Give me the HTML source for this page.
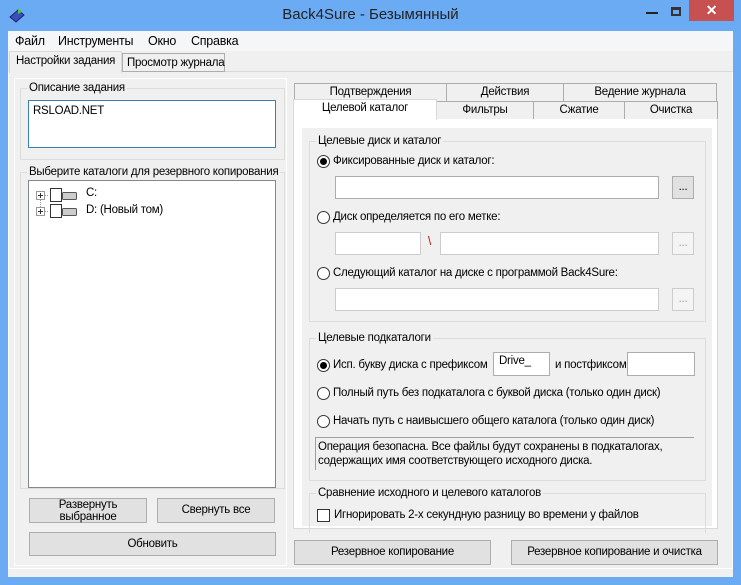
<!DOCTYPE html><html><head><meta charset="utf-8"><style>
*{box-sizing:border-box}body{margin:0;width:741px;height:585px;background:#6aabf3;font-family:"Liberation Sans",sans-serif;font-size:11.5px;letter-spacing:-0.25px;color:#000;position:relative;overflow:hidden}
.a{position:absolute;white-space:nowrap}
.box{position:absolute;background:#fff;border:1px solid #abadb3}
.btn{position:absolute;background:#e1e1e1;border:1px solid #adadad;text-align:center;line-height:22px;white-space:nowrap}
.grp{position:absolute;border:1px solid #dcdcdc}
.grp>span{position:absolute;top:-8px;left:6px;background:#f0f0f0;padding:0 2px;line-height:14px;white-space:nowrap}
.tab{position:absolute;background:#f0f0f0;border:1px solid #adadad;text-align:center;line-height:17px;white-space:nowrap}
.rad{position:absolute;width:13px;height:13px;border:1px solid #333;border-radius:50%;background:#fff}
.rad.on::after{content:"";position:absolute;left:2px;top:2px;width:7px;height:7px;border-radius:50%;background:#000}
</style></head><body>
<svg class="a" style="left:8px;top:6px" width="18" height="18"><path d="M2 11 L10 4 L16 9 L8 16Z" fill="#3b4fb8" stroke="#1a2470"/><path d="M10 2 L14 6 L10 8Z" fill="#4bc24b"/></svg>
<div class="a" style="left:0;top:6px;width:741px;text-align:center;font-size:15px;letter-spacing:0;color:#222">Back4Sure - Безымянный</div>
<div class="a" style="left:646px;top:12px;width:12px;height:2px;background:#222"></div>
<div class="a" style="left:671px;top:7px;width:10px;height:9px;border:2px solid #333;border-top-width:3px"></div>
<div class="a" style="left:689px;top:0;width:45px;height:21px;background:#c75050;color:#fff;text-align:center;font-size:14px;font-weight:bold;line-height:21px">✕</div>
<div class="a" style="left:8px;top:31px;width:725px;height:546px;background:#f0f0f0"></div>
<div class="a" style="left:8px;top:31px;width:725px;height:20px;background:#f5f6f7;font-size:12.5px;line-height:20px">
<span class="a" style="left:7px">Файл</span><span class="a" style="left:50px">Инструменты</span><span class="a" style="left:140px">Окно</span><span class="a" style="left:183px">Справка</span></div>
<div class="a" style="left:8px;top:71px;width:725px;height:498px;border:1px solid #fff;border-top-color:#d9d9d9"></div>
<div class="a" style="left:122px;top:53px;width:103px;height:19px;border:1px solid #adadad;background:#f0f0f0;line-height:18px;padding-left:4px">Просмотр журнала</div>
<div class="a" style="left:9px;top:51px;width:113px;height:22px;border:1px solid #d9d9d9;border-bottom:none;background:#f0f0f0;line-height:18px;padding-left:6px">Настройки задания</div>
<div class="a" style="left:14px;top:78px;width:273px;height:488px;border:1px solid #fff"></div>
<div class="grp" style="left:20px;top:88px;width:265px;height:72px"><span>Описание задания</span></div>
<div class="box" style="left:28px;top:100px;width:248px;height:48px;border-color:#3c7fb1;padding:4px 4px">RSLOAD.NET</div>
<div class="grp" style="left:20px;top:172px;width:265px;height:317px"><span>Выберите каталоги для резервного копирования</span></div>
<div class="box" style="left:28px;top:180px;width:248px;height:308px;border-color:#828790"></div>
<svg class="a" style="left:34px;top:186px" width="80" height="36"><g fill="none" stroke="#999"><rect x="2.5" y="5.5" width="8" height="8" fill="#fff"/><rect x="2.5" y="21.5" width="8" height="8" fill="#fff"/><path d="M4 9.5h5M6.5 7v5M4 25.5h5M6.5 23v5" stroke="#333"/><path d="M11 9.5h4M11 25.5h4M6.5 14v7" stroke-dasharray="1 1"/><rect x="16.5" y="2.5" width="11" height="13" fill="#fff" stroke="#333"/><rect x="16.5" y="18.5" width="11" height="13" fill="#fff" stroke="#333"/><rect x="28.5" y="6.5" width="14" height="7" rx="1" fill="#ccc" stroke="#555"/><rect x="28.5" y="22.5" width="14" height="7" rx="1" fill="#ccc" stroke="#555"/></g></svg>
<div class="a" style="left:86px;top:187px">C:</div><div class="a" style="left:86px;top:204px">D: (Новый том)</div>
<div class="btn" style="left:29px;top:498px;width:118px;height:25px;line-height:12px">Развернуть<br>выбранное</div>
<div class="btn" style="left:157px;top:498px;width:118px;height:25px">Свернуть все</div>
<div class="btn" style="left:29px;top:532px;width:247px;height:24px">Обновить</div>
<div class="tab" style="left:294px;top:83px;width:153px;height:19px">Подтверждения</div>
<div class="tab" style="left:446px;top:83px;width:118px;height:19px">Действия</div>
<div class="tab" style="left:563px;top:83px;width:154px;height:19px">Ведение журнала</div>
<div class="tab" style="left:436px;top:101px;width:98px;height:19px">Фильтры</div>
<div class="tab" style="left:533px;top:101px;width:92px;height:19px">Сжатие</div>
<div class="tab" style="left:624px;top:101px;width:94px;height:19px">Очистка</div>
<div class="a" style="left:293px;top:119px;width:425px;height:410px;background:#fff;border:1px solid #d9d9d9;border-top:none"></div>
<div class="a" style="left:293px;top:99px;width:144px;height:21px;background:#fff;border:1px solid #d9d9d9;border-bottom:none;text-align:center;line-height:16px">Целевой каталог</div>
<div class="a" style="left:302px;top:128px;width:410px;height:398px;background:#f0f0f0"></div>
<div class="grp" style="left:309px;top:141px;width:397px;height:181px"><span>Целевые диск и каталог</span></div>
<div class="rad on" style="left:317px;top:155px"></div><div class="a" style="left:333px;top:155px">Фиксированные диск и каталог:</div>
<div class="box" style="left:335px;top:176px;width:324px;height:23px"></div>
<div class="btn" style="left:672px;top:176px;width:22px;height:23px;line-height:20px">...</div>
<div class="rad" style="left:317px;top:211px"></div><div class="a" style="left:333px;top:211px">Диск определяется по его метке:</div>
<div class="box" style="left:335px;top:232px;width:86px;height:23px;border-color:#ccc"></div>
<div class="a" style="left:428px;top:236px;color:#c00">\</div>
<div class="box" style="left:440px;top:232px;width:219px;height:23px;border-color:#ccc"></div>
<div class="btn" style="left:672px;top:232px;width:22px;height:23px;line-height:20px;background:#f4f4f4;border-color:#ccc;color:#999">...</div>
<div class="rad" style="left:317px;top:267px"></div><div class="a" style="left:333px;top:267px">Следующий каталог на диске с программой Back4Sure:</div>
<div class="box" style="left:335px;top:288px;width:324px;height:23px;border-color:#ccc"></div>
<div class="btn" style="left:672px;top:288px;width:22px;height:23px;line-height:20px;background:#f4f4f4;border-color:#ccc;color:#999">...</div>
<div class="grp" style="left:309px;top:338px;width:397px;height:143px"><span>Целевые подкаталоги</span></div>
<div class="rad on" style="left:317px;top:359px"></div><div class="a" style="left:333px;top:359px">Исп. букву диска с префиксом</div>
<div class="box" style="left:493px;top:352px;width:57px;height:24px;padding:2px 5px">Drive_</div>
<div class="a" style="left:555px;top:359px">и постфиксом</div>
<div class="box" style="left:627px;top:352px;width:68px;height:24px"></div>
<div class="rad" style="left:317px;top:387px"></div><div class="a" style="left:333px;top:387px">Полный путь без подкаталога с буквой диска (только один диск)</div>
<div class="rad" style="left:317px;top:415px"></div><div class="a" style="left:333px;top:415px">Начать путь с наивысшего общего каталога (только один диск)</div>
<div class="a" style="left:315px;top:437px;width:379px;height:33px;border-top:1px solid #a0a0a0;border-left:1px solid #a0a0a0;padding:2px 2px;line-height:14px;white-space:normal">Операция безопасна. Все файлы будут сохранены в подкаталогах,<br>содержащих имя соответствующего исходного диска.</div>
<div class="grp" style="left:309px;top:493px;width:397px;height:40px;border-bottom:none"><span>Сравнение исходного и целевого каталогов</span></div>
<div class="a" style="left:317px;top:509px;width:13px;height:13px;border:1px solid #333;background:#fff"></div>
<div class="a" style="left:334px;top:509px">Игнорировать 2-х секундную разницу во времени у файлов</div>
<div class="btn" style="left:294px;top:540px;width:197px;height:25px">Резервное копирование</div>
<div class="btn" style="left:511px;top:540px;width:207px;height:25px">Резервное копирование и очистка</div>
</body></html>
